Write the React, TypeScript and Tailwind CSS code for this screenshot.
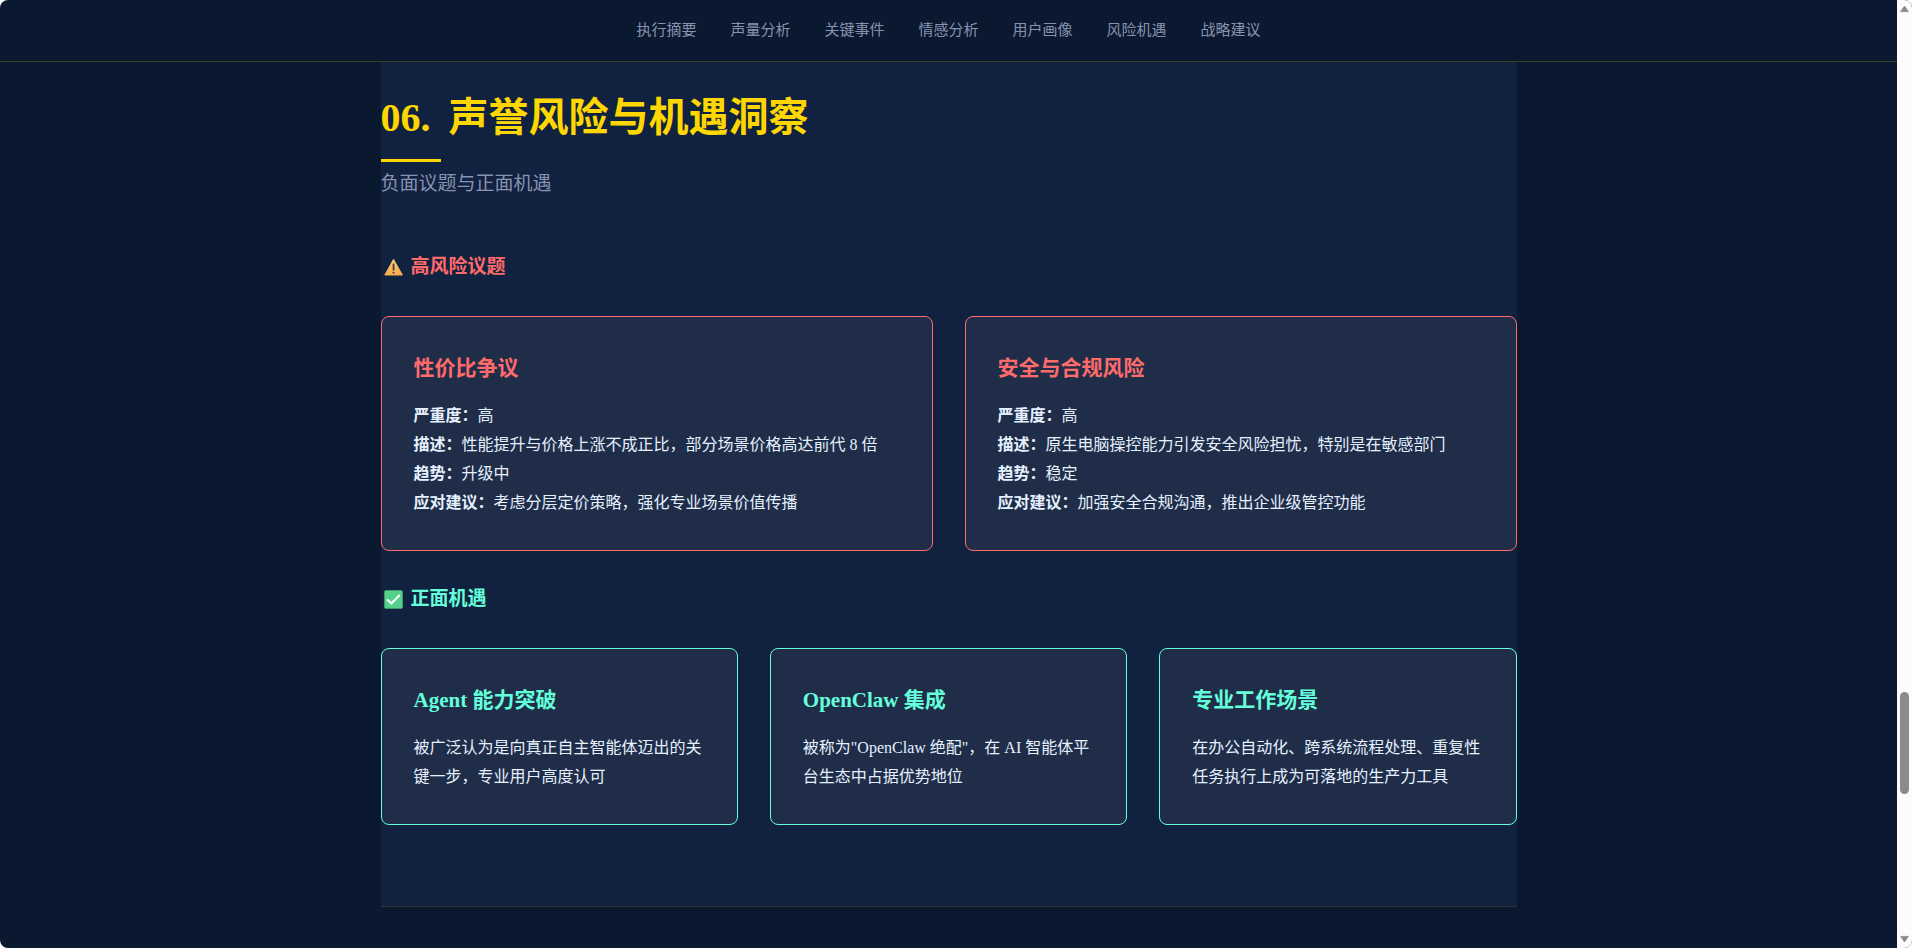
import type { ReactNode } from 'react'

const navItems = ['执行摘要', '声量分析', '关键事件', '情感分析', '用户画像', '风险机遇', '战略建议']

const risks = [
  {
    title: '性价比争议',
    severity: '高',
    description: '性能提升与价格上涨不成正比，部分场景价格高达前代 8 倍',
    trend: '升级中',
    advice: '考虑分层定价策略，强化专业场景价值传播'
  },
  {
    title: '安全与合规风险',
    severity: '高',
    description: '原生电脑操控能力引发安全风险担忧，特别是在敏感部门',
    trend: '稳定',
    advice: '加强安全合规沟通，推出企业级管控功能'
  }
]

const opportunities = [
  { title: 'Agent 能力突破', text: '被广泛认为是向真正自主智能体迈出的关键一步，专业用户高度认可' },
  { title: 'OpenClaw 集成', text: '被称为"OpenClaw 绝配"，在 AI 智能体平台生态中占据优势地位' },
  { title: '专业工作场景', text: '在办公自动化、跨系统流程处理、重复性任务执行上成为可落地的生产力工具' }
]

function WarningIcon() {
  return (
    <svg className="ml-[3px] h-[18px] w-5" viewBox="0 0 20 18" aria-hidden="true">
      <defs>
        <linearGradient id="warn" x1="0" y1="0" x2="0" y2="1">
          <stop offset="0" stopColor="#ffd071" />
          <stop offset="1" stopColor="#f9a84f" />
        </linearGradient>
      </defs>
      <path d="M9.5 1.4 L18.4 17 H0.8 Z" fill="url(#warn)" stroke="url(#warn)" strokeWidth="1" strokeLinejoin="round" />
      <rect x="8.6" y="5.4" width="1.9" height="7.2" rx="0.7" fill="#4b4440" />
      <rect x="8.6" y="13.7" width="1.9" height="1.9" rx="0.6" fill="#4b4440" />
    </svg>
  )
}

function CheckIcon() {
  return (
    <svg className="ml-[3px] h-[19px] w-5" viewBox="0 0 20 19" aria-hidden="true">
      <rect x="0.5" y="0.5" width="18" height="18" rx="1.5" fill="#54d08a" stroke="#3c9b6c" strokeWidth="1" />
      <path d="M3.6 10 L7.4 13.4 L15.2 5.6" fill="none" stroke="#fff" strokeWidth="2.1" strokeLinecap="round" strokeLinejoin="round" />
    </svg>
  )
}

function Field({ label, children }: { label: string; children: ReactNode }) {
  return (
    <p>
      <strong className="font-bold">{label}：</strong>
      {children}
    </p>
  )
}

function Scrollbar() {
  return (
    <div className="flex w-[15px] shrink-0 flex-col items-center bg-[#fcfcfc]" aria-hidden="true">
      <svg className="h-4 w-full" viewBox="0 0 15 16">
        <path d="M7.5 6 L11.4 11.6 H3.6 Z" fill="#8b8b8b" stroke="#8b8b8b" strokeWidth="0.8" strokeLinejoin="round" />
      </svg>
      <div className="grow-[676]" />
      <div className="w-[9px] grow-[102] rounded-full bg-[#8b8b8b]" />
      <div className="grow-[138]" />
      <svg className="h-4 w-full" viewBox="0 0 15 16">
        <path d="M7.5 10 L11.4 4.4 H3.6 Z" fill="#8b8b8b" stroke="#8b8b8b" strokeWidth="0.8" strokeLinejoin="round" />
      </svg>
    </div>
  )
}

export default function App() {
  return (
    <div className="flex h-screen overflow-hidden rounded-lg bg-[#0a192f] font-['Liberation_Serif','Noto_Sans_CJK_SC',serif] text-[#e6f1ff]">
      <div className="min-w-0 flex-1 overflow-hidden">
        <header className="flex h-[62px] items-center justify-center border-b border-[#3b3f26] pb-0.5">
          <nav>
            <ul className="flex gap-[34px] text-[15px] leading-6 text-[#8892b0]">
              {navItems.map(item => (
                <li key={item}>
                  <a href="#" className="hover:text-[#ffd700]">{item}</a>
                </li>
              ))}
            </ul>
          </nav>
        </header>

        <main className="mx-auto w-full max-w-[1136px]">
          <section className="border-b border-[#293338] bg-[#112240] pt-8 pb-[81px]">
            <h2 className="flex gap-[18px] text-[40px] leading-[48px] font-bold text-[#ffd700]">
              <span>06.</span>
              <span>声誉风险与机遇洞察</span>
            </h2>
            <div className="mt-[17px] h-[3px] w-[60px] bg-[#ffd700]" />
            <p className="mt-[5px] text-[19px] leading-[34px] text-[#8892b0]">负面议题与正面机遇</p>

            <h3 className="mt-[49px] mb-8 flex items-center gap-[7px] text-[19px] leading-[34px] font-bold text-[#ff6b6b]">
              <WarningIcon />
              高风险议题
            </h3>
            <div className="grid grid-cols-2 gap-8">
              {risks.map(risk => (
                <article key={risk.title} className="rounded-lg border border-[#ff6b6b] bg-[#1f2d49] px-8 pt-8 pb-[33px]">
                  <h4 className="mb-3.5 text-[21px] leading-[38px] font-bold text-[#ff6b6b]">{risk.title}</h4>
                  <div className="leading-[29px]">
                    <Field label="严重度">{risk.severity}</Field>
                    <Field label="描述">{risk.description}</Field>
                    <Field label="趋势">{risk.trend}</Field>
                    <Field label="应对建议">{risk.advice}</Field>
                  </div>
                </article>
              ))}
            </div>

            <h3 className="mt-[31px] mb-8 flex items-center gap-[7px] text-[19px] leading-[34px] font-bold text-[#64ffda]">
              <CheckIcon />
              正面机遇
            </h3>
            <div className="grid grid-cols-3 gap-8">
              {opportunities.map(item => (
                <article key={item.title} className="rounded-lg border border-[#64ffda] bg-[#1f2d49] px-8 pt-8 pb-[33px]">
                  <h4 className="mb-3.5 text-[21px] leading-[38px] font-bold text-[#64ffda]">{item.title}</h4>
                  <p className="leading-[29px]">{item.text}</p>
                </article>
              ))}
            </div>
          </section>
        </main>
      </div>
      <Scrollbar />
    </div>
  )
}
